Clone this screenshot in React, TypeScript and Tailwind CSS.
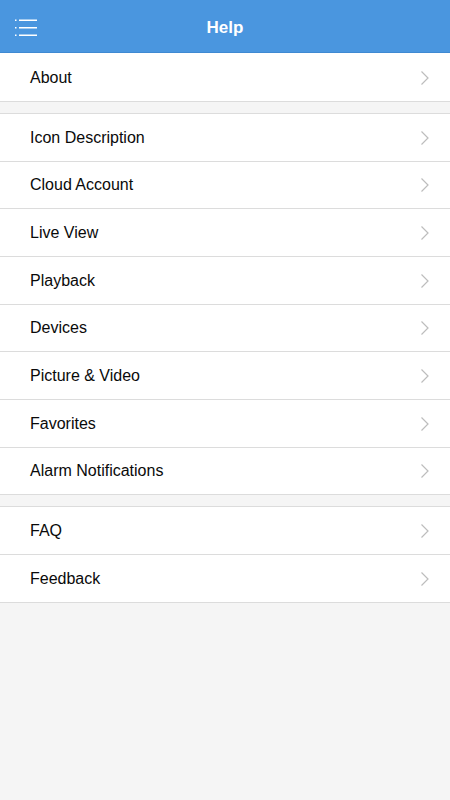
import React from "react";

const groups: string[][] = [
  ["About"],
  [
    "Icon Description",
    "Cloud Account",
    "Live View",
    "Playback",
    "Devices",
    "Picture & Video",
    "Favorites",
    "Alarm Notifications",
  ],
  ["FAQ", "Feedback"],
];

const Chevron = () => (
  <svg width="9" height="16" viewBox="0 0 9 16" fill="none">
    <path d="M1.5 1.5 L8 8 L1.5 14.5" stroke="#bdbdbd" strokeWidth="1.2" />
  </svg>
);

const MenuIcon = () => (
  <svg width="24" height="20" viewBox="0 0 24 20" fill="none">
    {/* three dotted list lines */}
    <rect x="0" y="2.5" width="1.5" height="1.5" fill="#fff" />
    <rect x="4" y="2.5" width="18" height="1.5" fill="#fff" />
    <rect x="0" y="10" width="1.5" height="1.5" fill="#fff" />
    <rect x="4" y="10" width="18" height="1.5" fill="#fff" />
    <rect x="0" y="17.5" width="1.5" height="1.5" fill="#fff" />
    <rect x="4" y="17.5" width="18" height="1.5" fill="#fff" />
  </svg>
);

export default function App() {
  return (
    <div
      className="min-h-[800px] w-full bg-[#f5f5f5]"
      style={{ fontFamily: '"Liberation Sans", Arial, sans-serif' }}
    >
      {/* Header */}
      <header className="relative h-[53px] pt-[4px] bg-[#4a96df] border-b border-[#3f89d2] flex items-center justify-center">
        <div className="absolute left-[15px] top-[17px]">
          <MenuIcon />
        </div>
        <h1 className="text-white text-[17px] font-bold">Help</h1>
      </header>

      {groups.map((items, gi) => (
        <div
          key={gi}
          className={gi === 0 ? "bg-white" : "mt-[11px] bg-white border-t border-[#dcdcdc]"}
        >
          {items.map((label) => (
            <div
              key={label}
              className={
                "flex items-center justify-between pt-[1px] pl-[30px] pr-[21px] border-b border-[#dcdcdc] " +
                (gi === 0 ? "h-[49px]" : "h-[47.67px]")
              }
            >
              <span className="text-[16px] text-[#0a0a0a]">{label}</span>
              <Chevron />
            </div>
          ))}
        </div>
      ))}
    </div>
  );
}
